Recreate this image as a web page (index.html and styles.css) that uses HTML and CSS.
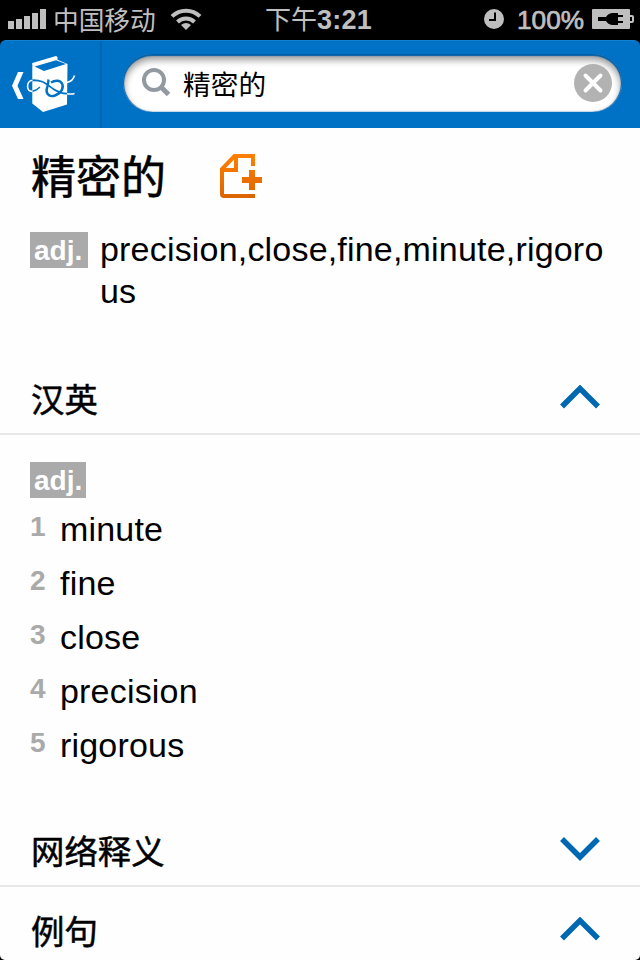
FILE: index.html
```html
<!DOCTYPE html>
<html lang="zh-CN">
<head>
<meta charset="utf-8">
<title>精密的</title>
<link rel="stylesheet" href="styles.css">
</head>
<body>
<div class="screen">
  <header class="status">
    <svg class="signal" width="38" height="20" viewBox="0 0 38 20" fill="#bfbfbf"><path d="M0 12h6v8H0zM8 10h6v10H8zM16 7h6v13h-6zM24 4h6v16h-6zM32 0h6v20h-6z"/></svg>
    <span class="carrier">中国移动</span>
    <svg class="wifi" width="32" height="24" viewBox="0 0 32 24" fill="none" stroke="#bfbfbf" stroke-width="4"><path d="M2 9.4a20 20 0 0 1 28 0M7.5 15a12 12 0 0 1 17 0"/><path d="M16 23l-5-5q5-4 10 0z" fill="#bfbfbf" stroke="none"/></svg>
    <span class="time"><span class="ampm">下午</span><b>3:21</b></span>
    <svg class="clock" width="20" height="20" viewBox="0 0 20 20"><circle cx="10" cy="10" r="10" fill="#bfbfbf"/><path d="M11 3.5V11H5" fill="none" stroke="#000" stroke-width="2"/></svg>
    <span class="percent">100%</span>
    <svg class="battery" width="42" height="20" viewBox="0 0 42 20"><path d="M1 0h36q1 0 1 1v5h2q2 0 2 2v4q0 2-2 2h-2v5q0 1-1 1H1q-1 0-1-1V1q0-1 1-1z" fill="#bfbfbf"/><path d="M6 8h8q2-3.500 6-4h6v2h5v2h-5v4h5v2h-5v2h-6q-4-.5-6-4H6zM38 8h2v4h-2z" fill="#000"/></svg>
  </header>
  <nav class="bar">
    <a class="back">
      <svg width="80" height="58" viewBox="0 55 80 58" fill="none">
        <path d="M18 72h5.500l-6 13.700 6 13.300H18l-6-13.300z" fill="#fff"/>
        <path d="M32.300 63L56 56l1.500 1v2.800L67.500 64 67 104.500 43 112l-10.700-8.500z" fill="#fff"/>
        <path d="M34.700 66.500L56 60.300l10 3.700-22 7z" fill="#0072c6"/>
        <g stroke="#0072c6" stroke-width="1.800">
          <path d="M31 80.300C44 79.500 47 85 54 89.500S64 93.500 68 93.800"/>
          <path d="M32 91.300C36 91 38 89 40 87" stroke-width="1.200"/>
          <path d="M51 82.500C55 80 60 80 62 83.500S62 93 55 95.500 45.500 92 47 88 48 84 48.500 79.500" stroke-width="2.400"/>
        </g>
        <path d="M32.500 80.200C29 80.500 27.300 83.500 27.600 87S30 91.500 32.500 91.300M67 82.500Q73 81 74.500 75.500M67 93.700Q71 94.500 74.500 93.500" stroke="#fff" stroke-width="1.600"/>
      </svg>
    </a>
    <div class="search">
      <svg width="30" height="30" viewBox="0 0 30 30" fill="none" stroke="#9299a1"><circle cx="12" cy="12" r="10" stroke-width="4"/><path d="M19 19l7.500 7.500" stroke-width="5"/></svg>
      <span class="query">精密的</span>
      <svg width="38" height="38" viewBox="0 0 38 38"><circle cx="19" cy="19" r="19" fill="#b2b2b2"/><path d="M11.500 11.500l15 15M26.500 11.500l-15 15" stroke="#fff" stroke-width="4" stroke-linecap="round"/></svg>
    </div>
  </nav>
  <main>
    <div class="headword">
      <h1>精密的</h1>
      <svg width="42" height="44" viewBox="0 0 42 44"><defs><linearGradient id="o" x1="0" y1="0" x2="0" y2="44" gradientUnits="userSpaceOnUse"><stop stop-color="#ff8000"/><stop offset="1" stop-color="#dc6400"/></linearGradient></defs><g fill="none" stroke="url(#o)"><path d="M33 12V2H14.500L2 15v25q0 2 2 2h31" stroke-width="4"/><path d="M16 3v13H3" stroke-width="4"/></g><path d="M22 23h7v-7h6v7h7v6h-7v7h-6v-7h-7z" fill="url(#o)"/></svg>
    </div>
    <div class="summary">
      <span class="pos wide">adj.</span>
      <p>precision,close,fine,minute,rigoro<br>us</p>
    </div>
    <section>
      <h2>汉英<svg width="40" height="24" viewBox="0 0 40 24"><path d="M2 21.500L20 3.500l18 18"/></svg></h2>
      <div class="entry">
        <span class="pos">adj.</span>
        <ol>
          <li><b>1</b><span>minute</span></li>
          <li><b>2</b><span>fine</span></li>
          <li><b>3</b><span>close</span></li>
          <li><b>4</b><span>precision</span></li>
          <li><b>5</b><span>rigorous</span></li>
        </ol>
      </div>
    </section>
    <section>
      <h2>网络释义<svg width="40" height="24" viewBox="0 0 40 24"><path d="M2 2l18 18L38 2"/></svg></h2>
    </section>
    <section>
      <h2 class="last">例句<svg width="40" height="24" viewBox="0 0 40 24"><path d="M2 21.500L20 3.500l18 18"/></svg></h2>
    </section>
  </main>
</div>
</body>
</html>
```
FILE: styles.css
```css
* { box-sizing: border-box; margin: 0; padding: 0; }
html { background: #000; }
body { font-family: "Liberation Sans", "Noto Sans CJK SC", sans-serif; color: #000; background: #000; }
svg { display: block; flex: none; }
.screen { width: 640px; height: 960px; overflow: hidden; display: flex; flex-direction: column; }
.status { height: 40px; flex: none; display: flex; align-items: center; padding: 0 6px 2px 8px; color: #bfbfbf; font-size: 26px; line-height: 38px; white-space: nowrap; }
.carrier { width: 104px; margin-left: 7px; padding-top: 3px; font-size: 25.7px; }
.wifi { margin-left: 13px; }
.time { width: 110px; margin-left: 63px; display: flex; }
.ampm { padding-top: 2px; }
.time b { padding-top: 2px; font-size: 27px; letter-spacing: .2px; }
.clock { margin-left: 109px; }
.percent { width: 72px; margin-left: 13px; padding-top: 2px; font-size: 26.200px; -webkit-text-stroke: .7px #bfbfbf; }
.battery { margin-left: 3px; }
.bar { height: 88px; flex: none; display: flex; background: #0072c6; border-top: 1px solid #1281d2; border-radius: 6px 6px 0 0; }
.back { width: 102px; border-right: 2px solid #0065b3; padding-top: 14px; }
.search { width: 499px; height: 58px; margin: 13px 0 0 21px; border-radius: 29px; background: #fff; display: flex; align-items: center; padding: 0 10px 1px 19px; box-shadow: inset 0 2px 1px #0060aa, inset 1px 0 1px #0060aa, inset -1px 0 1px #0060aa, inset 0 5px 7px 1px rgba(0,0,0,.4); }
.query { flex: 1; padding: 7px 0 0 11px; font-size: 27.700px; line-height: 40px; }
main { flex: 1; background: #fefefe; border-radius: 0 0 5px 5px; overflow: hidden; }
.headword { height: 100px; display: flex; align-items: flex-start; padding: 26px 0 0 31px; }
h1 { width: 189px; padding-top: 2px; font-size: 45px; line-height: 46px; font-weight: 400; -webkit-text-stroke: .6px #000; }
.summary { height: 139px; display: flex; align-items: flex-start; padding-left: 30px; }
.pos { display: block; width: 56px; height: 36px; margin-top: 4px; padding-left: 4px; background: #aaa; color: #fff; font-size: 28px; line-height: 37px; font-weight: 700; }
.wide { width: 58px; }
.summary p { margin-left: 12px; font-size: 34px; line-height: 42px; letter-spacing: .19px; white-space: nowrap; }
h2 { height: 68px; display: flex; justify-content: space-between; padding: 11px 40px 0 31px; border-bottom: 2px solid #e8e8e8; font-size: 33.400px; line-height: 46px; font-weight: 400; -webkit-text-stroke: .5px #000; }
h2 svg { margin-top: 7px; fill: none; stroke: #0068b0; stroke-width: 5.500; }
.entry { height: 384px; padding: 23px 30px 0; }
ol { list-style: none; padding-top: 4px; }
li { height: 54px; display: flex; font-size: 34px; line-height: 54px; letter-spacing: .19px; }
li b { width: 30px; color: #aaa; font-size: 28px; line-height: 50px; }
.last { height: 80px; padding-top: 23px; border: 0; }
```
